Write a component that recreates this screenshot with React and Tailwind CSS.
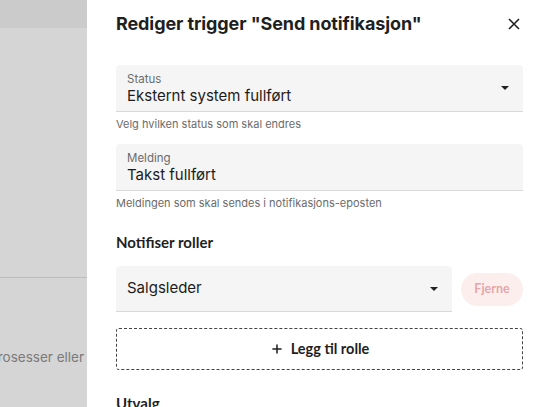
import { Plus } from 'lucide-react';

const inter = { fontFamily: 'Inter, "Noto Sans", sans-serif' };
const lato = { fontFamily: 'Lato, Inter, sans-serif' };

function Caret() {
  return (
    <svg width="8" height="4" viewBox="0 0 8 4" className="block text-[#222]">
      <path d="M0 0 L8 0 L4 4 Z" fill="currentColor" />
    </svg>
  );
}

function FilledField({ label, value, select }) {
  return (
    <div className="h-[47px] bg-[#f5f5f5] rounded-t-[4px] border-b border-[#d9d9d9] px-[11px] flex items-center">
      <div className="flex-1 min-w-0">
        <p className="text-[11.5px] leading-[14px] text-[#6b6b6b] mt-[1px]">{label}</p>
        <p className="text-[15px] leading-[19px] text-[#1c1c1c]">{value}</p>
      </div>
      {select && <div className="pr-[3px] -mt-[1px]"><Caret /></div>}
    </div>
  );
}

export default function App() {
  return (
    <div className="w-[536px] h-[407px] overflow-hidden flex" style={inter}>
      {/* Backdrop */}
      <div className="w-[87px] shrink-0 flex flex-col bg-[#d5d5d5]">
        <div className="h-[28px] bg-[#cbcbcb]" />
        <div className="h-[250px] border-b border-[#bdbdbd]" />
        <div className="mt-[69px] flex justify-end overflow-hidden pr-[3px]">
          <span className="shrink-0 whitespace-nowrap text-[13.5px] text-[#7a7a7a]">Ingen prosesser eller</span>
        </div>
      </div>

      {/* Drawer */}
      <div className="flex-1 bg-white pl-[29px] pr-[13px]">
        <div className="flex items-center justify-between h-[46px] pt-[1px]">
          <h2 className="text-[18px] font-bold text-[#1f1f1f] tracking-[-0.1px]">Rediger trigger "Send notifikasjon"</h2>
          <svg width="12" height="12" viewBox="0 0 12 12" className="mr-[3px]">
            <path d="M1 1 L11 11 M11 1 L1 11" stroke="#222" strokeWidth="1.6" />
          </svg>
        </div>

        <div className="mt-[19px]">
          <FilledField label="Status" value="Eksternt system fullført" select />
          <p className="text-[11px] text-[#6b6b6b] mt-[5px] leading-[14px]">Velg hvilken status som skal endres</p>
        </div>

        <div className="mt-[13px]">
          <FilledField label="Melding" value="Takst fullført" />
          <p className="text-[11px] text-[#6b6b6b] mt-[5px] leading-[14px]">Meldingen som skal sendes i notifikasjons-eposten</p>
        </div>

        <h3 className="mt-[22px] text-[15px] font-bold text-[#1f1f1f] leading-[20px]" style={lato}>Notifiser roller</h3>

        <div className="mt-[14px] flex items-center gap-[9px]">
          <div className="flex-1 h-[46px] bg-[#f5f5f5] rounded-t-[4px] border-b border-[#d9d9d9] px-[11px] flex items-center justify-between">
            <span className="text-[15px] text-[#1c1c1c]">Salgsleder</span>
            <span className="pr-[3px]"><Caret /></span>
          </div>
          <button className="w-[62px] h-[33px] rounded-full bg-[#fdeeee] text-[#e6a6aa] text-[12.5px] font-bold" style={lato}>Fjerne</button>
        </div>

        <div className="mt-[16px] h-[42px] border border-dashed border-[#444] rounded-[3px] flex items-center justify-center gap-[7px] text-[#1f1f1f]">
          <Plus size={14} strokeWidth={2.6} />
          <span className="text-[14.5px] font-bold" style={lato}>Legg til rolle</span>
        </div>

        <h3 className="mt-[22px] text-[15px] font-bold text-[#1f1f1f]" style={lato}>Utvalg</h3>
      </div>
    </div>
  );
}
